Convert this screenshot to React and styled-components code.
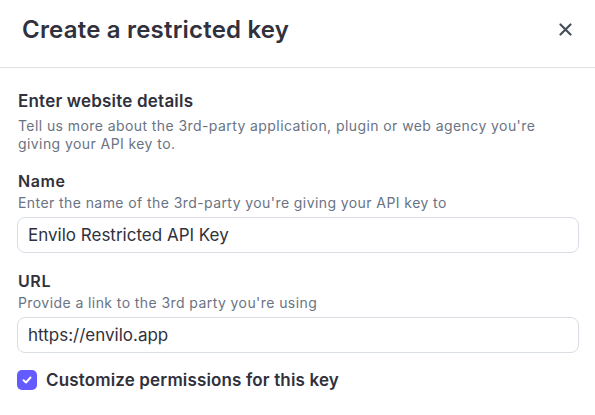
import React from "react";
import styled, { createGlobalStyle } from "styled-components";

const Global = createGlobalStyle`
  html, body { margin: 0; padding: 0; background: #fff; }
  body { font-family: Inter, "Noto Sans", sans-serif; -webkit-font-smoothing: antialiased; }
  * { box-sizing: border-box; }
`;

const Modal = styled.div`
  width: 595px;
  height: 415px;
  background: #fff;
  display: flex;
  flex-direction: column;
  overflow: hidden;
`;

const Header = styled.div`
  height: 68px;
  flex: none;
  display: flex;
  align-items: center;
  justify-content: space-between;
  padding: 0 22px 8px 22px;
  border-bottom: 1px solid #e0e0e3;
`;

const Title = styled.h1`
  margin: 0;
  font-size: 24px;
  font-weight: 600;
  color: #30313d;
  letter-spacing: 0.2px;
  line-height: 30px;
`;

const Close = styled.button`
  border: none;
  background: none;
  padding: 0;
  width: 16px;
  height: 16px;
  display: flex;
  align-items: center;
  justify-content: center;
  color: #474e5a;
  cursor: pointer;
`;

const Body = styled.div`
  padding: 22px 16px 0 17px;
  display: flex;
  flex-direction: column;
`;

const Section = styled.div`
  display: flex;
  flex-direction: column;
  margin-bottom: ${(p) => p.$mb || 0}px;
`;

const Heading = styled.div`
  font-size: ${(p) => p.$size || 16}px;
  font-weight: 600;
  color: #30313d;
  line-height: 22px;
  letter-spacing: ${(p) => p.$ls ?? 0.6}px;
  padding-left: 1px;
`;

const Hint = styled.div`
  margin-top: ${(p) => p.$mt || 2}px;
  font-size: 14px;
  letter-spacing: 0.42px;
  color: #6a7383;
  line-height: 18px;
  padding-left: 1px;
`;

const Input = styled.input`
  margin-top: 5px;
  width: 562px;
  height: 36px;
  border: 1px solid #d8dee4;
  border-radius: 8px;
  padding: 0 10px;
  font-family: inherit;
  font-size: 17px;
  color: #30313d;
  outline: none;
  background: #fff;
`;

const CheckRow = styled.label`
  display: flex;
  align-items: center;
  gap: 9px;
  font-size: 17px;
  font-weight: 600;
  letter-spacing: 0.15px;
  color: #30313d;
`;

const Box = styled.span`
  width: 20px;
  height: 20px;
  border-radius: 5px;
  background: #635bff;
  display: flex;
  align-items: center;
  justify-content: center;
`;

export default function App() {
  return (
    <>
      <Global />
      <Modal>
        <Header>
          <Title>Create a restricted key</Title>
          <Close aria-label="Close">
            <svg width="13" height="13" viewBox="0 0 13 13">
              <path d="M1.5 1.5 L11.5 11.5 M11.5 1.5 L1.5 11.5" stroke="currentColor" strokeWidth="2.2" strokeLinecap="round" />
            </svg>
          </Close>
        </Header>
        <Body>
          <Section $mb={17}>
            <Heading $size={17} $ls={0.2}>Enter website details</Heading>
            <Hint $mt={5}>Tell us more about the 3rd-party application, plugin or web agency you're giving your API key to.</Hint>
          </Section>
          <Section $mb={17}>
            <Heading>Name</Heading>
            <Hint>Enter the name of the 3rd-party you're giving your API key to</Hint>
            <Input defaultValue="Envilo Restricted API Key" />
          </Section>
          <Section $mb={17}>
            <Heading>URL</Heading>
            <Hint>Provide a link to the 3rd party you're using</Hint>
            <Input defaultValue="https://envilo.app" />
          </Section>
          <CheckRow>
            <Box>
              <svg width="12" height="12" viewBox="0 0 12 12">
                <path d="M2.5 6.2 L5 8.5 L9.5 3.5" fill="none" stroke="#fff" strokeWidth="2" strokeLinecap="round" strokeLinejoin="round" />
              </svg>
            </Box>
            Customize permissions for this key
          </CheckRow>
        </Body>
      </Modal>
    </>
  );
}
